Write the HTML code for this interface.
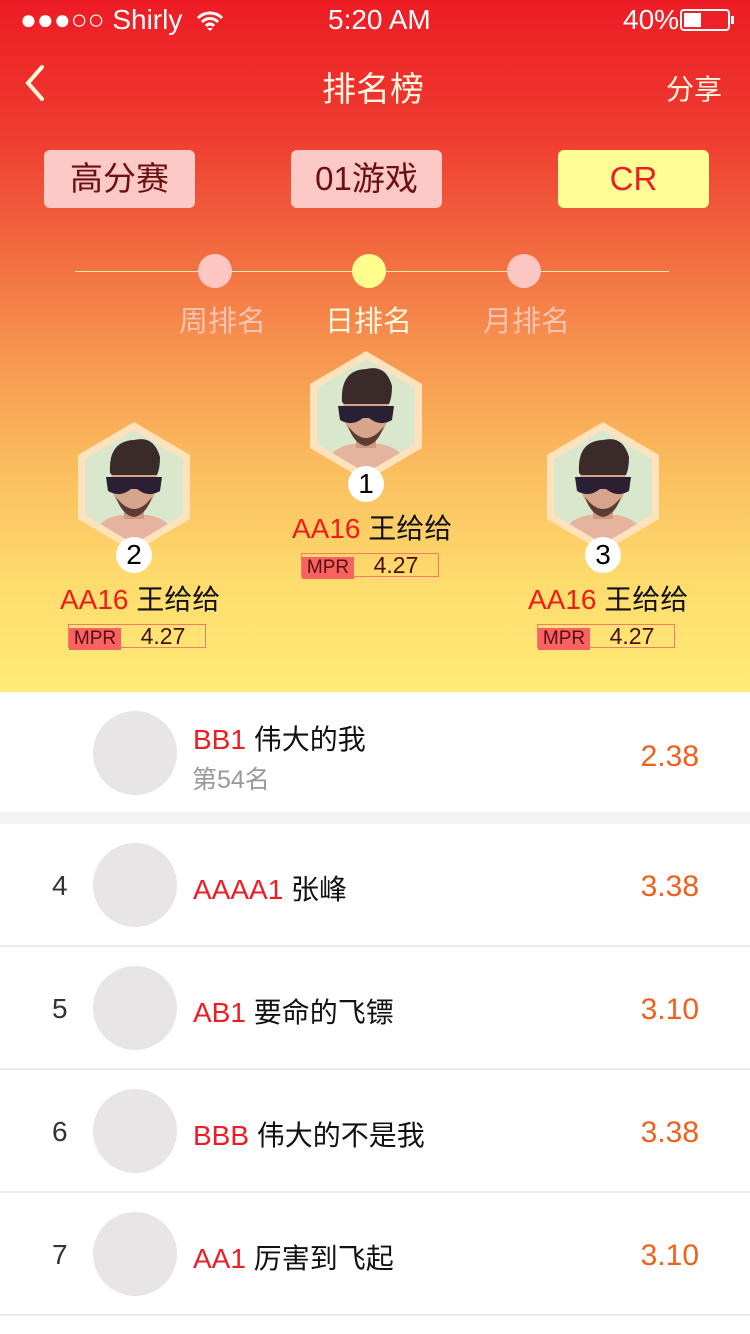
<!DOCTYPE html>
<html><head><meta charset="utf-8"><style>
*{margin:0;padding:0;box-sizing:border-box}
body{width:750px;height:1334px;overflow:hidden;font-family:"Liberation Sans","Noto Sans CJK SC",sans-serif;background:#fff;position:relative}
.top{position:absolute;left:0;top:0;width:750px;height:692px;background:linear-gradient(180deg,#ed1c24 0px,#ef3a30 130px,#f26a3f 250px,#f6944f 350px,#fbbe5e 470px,#fedb6e 580px,#ffec76 692px)}
.a{position:absolute;white-space:nowrap}
.btn{position:absolute;top:150px;width:151px;height:58px;border-radius:6px;background:#fdc9c6;color:#6b0f0f;font-size:33px;text-align:center;line-height:58px}
.dot{position:absolute;top:254px;width:34px;height:34px;border-radius:50%;background:#fdc6c3}
.tab{position:absolute;top:298px;font-size:29px;color:#fcc3b3}
.badge{position:absolute;width:36px;height:36px;border-radius:50%;background:#fff;color:#000;font-size:28px;text-align:center;line-height:36px}
.mpr{position:absolute;width:138px;height:24px;border:1px solid #f57a6a;font-size:23px;line-height:22px}
.mpr b{display:inline-block;width:52px;height:22px;background:#f86262;color:#5a1010;font-weight:normal;font-size:19px;text-align:center}
.mpr span{display:inline-block;width:84px;text-align:center;color:#4a0d0d}
.nm{position:absolute;font-size:28px;color:#111}
.nm i{font-style:normal;color:#f01c1c}
.row{position:absolute;left:0;width:750px;border-bottom:2px solid #ececec}
.av{position:absolute;left:93px;width:84px;height:84px;border-radius:50%;background:#e7e5e6}
.rk{position:absolute;left:52px;font-size:28px;color:#333}
.sc{position:absolute;right:51px;font-size:30px;color:#f0601c}
.rn{position:absolute;left:193px;font-size:28px;color:#111}
.rn i{font-style:normal;color:#ee1c25}
</style></head><body>
<div class="top"></div>
<div class="a" style="left:20px;top:4px;font-size:28px;color:#fff">●●●○○ Shirly</div>
<svg class="a" style="left:196px;top:10px" width="28" height="22" viewBox="0 0 28 22"><path d="M2 8a17 17 0 0 1 24 0M6 12a11 11 0 0 1 16 0M10 16a5 5 0 0 1 8 0" stroke="#fff" stroke-width="3" fill="none"/><path d="M11 18l3 3 3-3z" fill="#fff"/></svg>
<div class="a" style="left:328px;top:4px;font-size:28px;color:#fff">5:20 AM</div>
<div class="a" style="left:623px;top:4px;font-size:28px;color:#fff">40%</div>
<div class="a" style="left:680px;top:9px;width:50px;height:22px;border:2px solid #fff;border-radius:4px"><div style="margin:2px;width:17px;height:14px;background:#fff"></div></div>
<div class="a" style="left:731px;top:16px;width:3px;height:8px;background:#fff"></div>
<svg class="a" style="left:20px;top:64px" width="30" height="38"><path d="M22 3L8 19l14 16" stroke="#fff6d6" stroke-width="4" fill="none" stroke-linecap="round"/></svg>
<div class="a" style="left:322px;top:62px;font-size:34px;color:#fff7e0">排名榜</div>
<div class="a" style="left:666px;top:68px;font-size:28px;color:#fff7e0">分享</div>
<div class="btn" style="left:44px">高分赛</div>
<div class="btn" style="left:291px">01游戏</div>
<div class="btn" style="left:558px;background:#fffe94;color:#ee1c25">CR</div>
<div class="a" style="left:75px;top:271px;width:594px;height:1px;background:#ffe6b0"></div>
<div class="dot" style="left:198px"></div>
<div class="dot" style="left:352px;background:#fffe8c"></div>
<div class="dot" style="left:507px"></div>
<div class="tab" style="left:179px">周排名</div>
<div class="tab" style="left:325px;color:#fff8e0">日排名</div>
<div class="tab" style="left:483px;color:#fcc3b3">月排名</div>

<svg class="a" style="left:0;top:350px" width="750" height="320">
<defs>
<clipPath id="cp"><path d="M-49,-28L0,-57L49,-28L49,28L0,57L-49,28Z"/></clipPath>
<g id="face">
<path d="M-56,-32L0,-65L56,-32L56,32L0,65L-56,32Z" fill="#fde2bc"/>
<path d="M-49,-28L0,-57L49,-28L49,28L0,57L-49,28Z" fill="#d9e8cc"/>
<g clip-path="url(#cp)">
<path d="M-46,60 Q-40,32 -14,28 L14,28 Q40,32 46,60Z" fill="#e6b49e"/>
<rect x="-10" y="14" width="20" height="18" fill="#cf9a82"/>
<ellipse cx="0" cy="-6" rx="23" ry="30" fill="#d7a58c"/>
<path d="M-24,-14 Q-26,-46 0,-47 Q20,-52 26,-30 Q26,-18 23,-12 L-22,-12Z" fill="#3b2a2a"/>
<path d="M-28,-10 L28,-10 L26,4 Q14,11 3,2 L-3,2 Q-14,11 -26,4Z" fill="#2a1f33"/>
<path d="M-18,10 Q0,34 18,10 Q12,28 0,30 Q-12,28 -18,10Z" fill="#5b3b34"/>
</g></g></defs>
<use href="#face" x="134" y="137"/>
<use href="#face" x="366" y="66"/>
<use href="#face" x="603" y="137"/>
</svg>
<div class="badge" style="left:348px;top:466px">1</div>
<div class="badge" style="left:116px;top:537px">2</div>
<div class="badge" style="left:585px;top:537px">3</div>
<div class="nm" style="left:292px;top:507px"><i>AA16</i> 王给给</div>
<div class="nm" style="left:60px;top:578px"><i>AA16</i> 王给给</div>
<div class="nm" style="left:528px;top:578px"><i>AA16</i> 王给给</div>
<div class="mpr" style="left:301px;top:553px"><b>MPR</b><span>4.27</span></div>
<div class="mpr" style="left:68px;top:624px"><b>MPR</b><span>4.27</span></div>
<div class="mpr" style="left:537px;top:624px"><b>MPR</b><span>4.27</span></div>

<div class="row" style="top:692px;height:120px;border:none">
<div class="av" style="top:19px"></div>
<div class="rn" style="top:26px"><i>BB1</i> 伟大的我</div>
<div class="a" style="left:192px;top:68px;font-size:25px;color:#999">第54名</div>
<div class="sc" style="top:48px">2.38</div></div>
<div class="a" style="left:0;top:812px;width:750px;height:12px;background:#f3f3f3"></div>

<div class="row" style="top:824px;height:123px"><div class="rk" style="top:46px">4</div><div class="av" style="top:19px"></div><div class="rn" style="top:44px"><i>AAAA1</i> 张峰</div><div class="sc" style="top:46px">3.38</div></div>
<div class="row" style="top:947px;height:123px"><div class="rk" style="top:46px">5</div><div class="av" style="top:19px"></div><div class="rn" style="top:44px"><i>AB1</i> 要命的飞镖</div><div class="sc" style="top:46px">3.10</div></div>
<div class="row" style="top:1070px;height:123px"><div class="rk" style="top:46px">6</div><div class="av" style="top:19px"></div><div class="rn" style="top:44px"><i>BBB</i> 伟大的不是我</div><div class="sc" style="top:46px">3.38</div></div>
<div class="row" style="top:1193px;height:123px"><div class="rk" style="top:46px">7</div><div class="av" style="top:19px"></div><div class="rn" style="top:44px"><i>AA1</i> 厉害到飞起</div><div class="sc" style="top:46px">3.10</div></div>
</body></html>
